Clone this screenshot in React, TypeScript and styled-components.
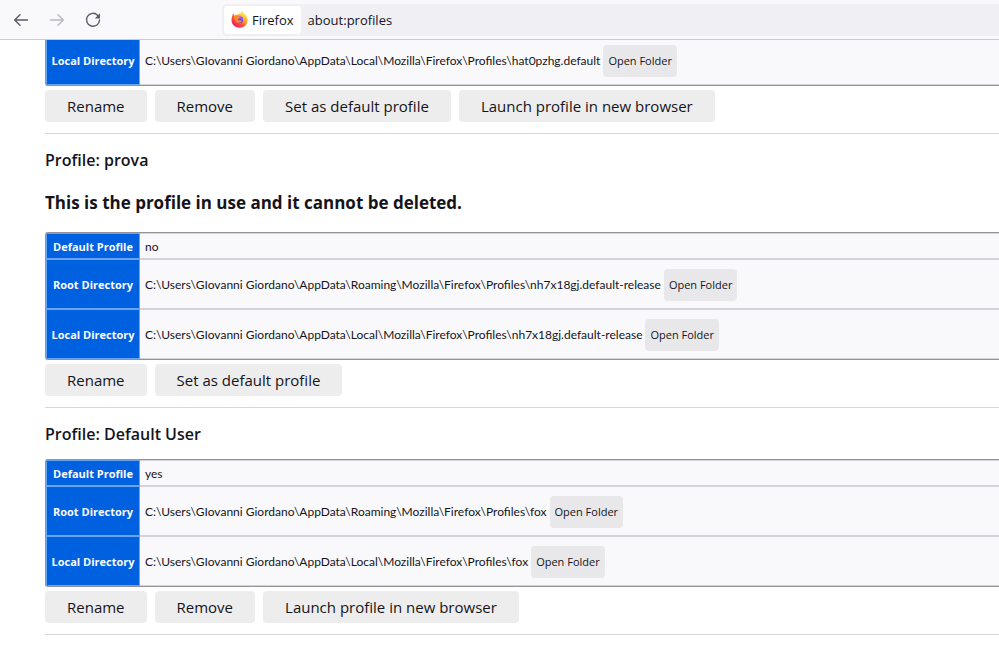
import React from "react";
import styled, { createGlobalStyle } from "styled-components";

const GlobalStyle = createGlobalStyle`
  *, *::before, *::after { box-sizing: border-box; }
  html, body { margin: 0; background: #ffffff; }
  body {
    font-family: "Segoe UI", "Open Sans", "Noto Sans", sans-serif;
    color: #15141a;
    overflow: hidden;
  }
  button, input { font-family: inherit; color: inherit; }
`;

const Page = styled.div`
  display: flex;
  flex-direction: column;
`;

const Toolbar = styled.header`
  display: flex;
  align-items: center;
  height: 40px;
  padding-left: 9px;
  background: #f9f9fb;
  border-bottom: 1px solid #cccccc;
`;

const Nav = styled.nav`
  display: flex;
  gap: 12px;
`;

const NavButton = styled.button`
  display: flex;
  align-items: center;
  justify-content: center;
  width: 24px;
  height: 24px;
  padding: 0;
  border: 0;
  background: none;

  &:disabled { opacity: 0.4; }
`;

const UrlBar = styled.div`
  display: flex;
  align-items: center;
  flex: 1;
  height: 32px;
  margin-left: 117px;
  padding: 2px;
  border-radius: 4px 0 0 4px;
  background: #f0f0f4;
`;

const Identity = styled.button`
  display: flex;
  align-items: center;
  gap: 4px;
  height: 28px;
  padding: 0 7px;
  border: 0;
  border-radius: 3px;
  background: #ffffff;
  font-size: 13px;
`;

const UrlInput = styled.input`
  flex: 1;
  min-width: 0;
  padding: 0 7px;
  border: 0;
  outline: 0;
  background: transparent;
  font-size: 13px;
`;

const Content = styled.main`
  overflow: hidden;
  padding-left: 45px;
`;

const Profile = styled.section<{ $scrolled?: boolean }>`
  margin-top: ${(p) => (p.$scrolled ? "-6px" : "0")};
  border-bottom: 1px solid #d7d7db;
  padding-bottom: 11px;
`;

const ProfileName = styled.h2`
  margin: 0;
  padding: 14px 0 13px;
  font-size: 16px;
  font-weight: 600;
  line-height: 24px;
`;

const InUse = styled.h3`
  margin: 0;
  padding: 5px 0 16px;
  font-size: 17px;
  font-weight: 700;
  line-height: 26px;
`;

const Table = styled.table`
  width: 100%;
  border: 1px solid #939399;
  border-right: 0;
  border-radius: 3px 0 0 3px;
  border-spacing: 0;
  overflow: hidden;
  background: #f9f9fb;
  font-size: 12px;
  line-height: 16px;
`;

const Row = styled.tr<{ $tall?: boolean }>`
  height: ${(p) => (p.$tall ? "50px" : "26px")};
`;

const Label = styled.th`
  width: 94px;
  padding: 2px 0 0;
  border: 1px solid #6ba4ee;
  background: #0061e0;
  color: #fbfbfe;
  font-size: 11px;
  font-weight: 700;
  text-align: center;
  white-space: nowrap;
`;

const Value = styled.td`
  padding: 1px 0 0 5px;
  border: 1px solid #d4d4d8;
  border-width: 1px 0;
  font-family: "Segoe UI", Lato, sans-serif;
  white-space: nowrap;
`;

const Directory = styled.div`
  display: flex;
  align-items: center;
  gap: 3px;
`;

const FolderButton = styled.button`
  height: 32px;
  padding: 0 5px;
  border: 0;
  border-radius: 4px;
  background: #e8e8ea;
  font-family: "Segoe UI", "Open Sans", sans-serif;
  font-size: 11px;
  font-weight: 500;
`;

const Actions = styled.div`
  display: flex;
  gap: 8px;
  padding-top: 4px;
`;

const ActionButton = styled.button`
  height: 32px;
  padding: 0 22px;
  border: 0;
  border-radius: 4px;
  background: #ededed;
  font-size: 15px;
  white-space: nowrap;
`;

const Arrow = ({ forward }: { forward?: boolean }) => (
  <svg width="16" height="16" viewBox="0 0 16 16" fill="none" stroke="#5b5b66" strokeWidth="1.4" strokeLinecap="round" strokeLinejoin="round">
    <path d={forward ? "M1.5 8H14.3M9 2.7L14.3 8L9 13.3" : "M14.5 8H1.7M7 2.7L1.7 8L7 13.3"} />
  </svg>
);

const Reload = () => (
  <svg width="16" height="16" viewBox="0 0 16 16" fill="none">
    <path d="M12.6 3.2A6.5 6.5 0 1 0 14.5 8" stroke="#5b5b66" strokeWidth="1.4" strokeLinecap="round" />
    <path d="M15 1.2V6a.6.6 0 0 1-.6.6H9.8Z" fill="#5b5b66" />
  </svg>
);

const FirefoxLogo = () => (
  <svg width="17" height="17" viewBox="0 0 32 32">
    <defs>
      <linearGradient id="flame" x1="0.85" y1="0.1" x2="0.2" y2="0.95">
        <stop offset="0" stopColor="#fff44f" />
        <stop offset="0.35" stopColor="#ffb02e" />
        <stop offset="0.6" stopColor="#ff5a36" />
        <stop offset="1" stopColor="#f0166e" />
      </linearGradient>
      <linearGradient id="globe" x1="0.7" y1="0" x2="0.3" y2="1">
        <stop offset="0" stopColor="#a05cff" />
        <stop offset="1" stopColor="#5a3fc8" />
      </linearGradient>
      <linearGradient id="tail" x1="0.6" y1="0" x2="0.5" y2="1">
        <stop offset="0" stopColor="#fff36a" />
        <stop offset="0.6" stopColor="#ffc83a" />
        <stop offset="1" stopColor="#ff8a2c" />
      </linearGradient>
    </defs>
    <path d="M5 3c0 3 .5 4 1.500 6C8 7.600 10 7 12 7.200 14 5 16 4.500 18 4.500L20 0c3 2 4 5.500 6 7l1 1c3 3 4 6 4 10 0 8-6.500 13.500-15 13.500S1 25.500 1 18c0-5 1.500-11.500 4-15Z" fill="url(#flame)" />
    <circle cx="17" cy="16" r="6" fill="url(#globe)" />
    <path d="M20 0c-2 5 0 8 3 11 2.500 2.500 3 6 1.500 9 3-1 4-4 4-7 1 2 1 4 1 6 2-5 .5-9-3-12.500C24 5 21 4 20 0Z" fill="url(#tail)" />
    <path d="M5.500 10c3-2 6-1.500 8 .5l4 .8c0 1.700-2 2.400-4 3.200-1 2 .5 4 3.500 3.500 2-.4 3 .3 3 1-1.500 3.500-7 4.500-10.500 1.500C7 18 6 14 5.500 10Z" fill="#ff8a26" />
  </svg>
);

type Entry = { label: string; value: string; folder?: boolean };
type ProfileData = {
  name?: string;
  inUse?: boolean;
  entries: Entry[];
  actions: string[];
};

const base = "C:\\Users\\GIovanni Giordano\\AppData\\";
const directory = (kind: "Root" | "Local", id: string): Entry => ({
  label: `${kind} Directory`,
  value: `${base}${kind === "Root" ? "Roaming" : "Local"}\\Mozilla\\Firefox\\Profiles\\${id}`,
  folder: true,
});

const profiles: ProfileData[] = [
  {
    entries: [directory("Local", "hat0pzhg.default")],
    actions: ["Rename", "Remove", "Set as default profile", "Launch profile in new browser"],
  },
  {
    name: "prova",
    inUse: true,
    entries: [
      { label: "Default Profile", value: "no" },
      directory("Root", "nh7x18gj.default-release"),
      directory("Local", "nh7x18gj.default-release"),
    ],
    actions: ["Rename", "Set as default profile"],
  },
  {
    name: "Default User",
    entries: [
      { label: "Default Profile", value: "yes" },
      directory("Root", "fox"),
      directory("Local", "fox"),
    ],
    actions: ["Rename", "Remove", "Launch profile in new browser"],
  },
];

export default function App() {
  return (
    <Page>
      <GlobalStyle />
      <Toolbar>
        <Nav aria-label="Navigation">
          <NavButton aria-label="Back"><Arrow /></NavButton>
          <NavButton aria-label="Forward" disabled><Arrow forward /></NavButton>
          <NavButton aria-label="Reload"><Reload /></NavButton>
        </Nav>
        <UrlBar>
          <Identity><FirefoxLogo />Firefox</Identity>
          <UrlInput aria-label="Address" defaultValue="about:profiles" />
        </UrlBar>
      </Toolbar>
      <Content>
        {profiles.map((profile, index) => (
          <Profile key={index} $scrolled={!profile.name}>
            {profile.name && <ProfileName>Profile: {profile.name}</ProfileName>}
            {profile.inUse && <InUse>This is the profile in use and it cannot be deleted.</InUse>}
            <Table>
              <tbody>
                {profile.entries.map((entry) => (
                  <Row key={entry.label} $tall={entry.folder}>
                    <Label scope="row">{entry.label}</Label>
                    <Value>
                      {entry.folder ? (
                        <Directory>
                          <span>{entry.value}</span>
                          <FolderButton>Open Folder</FolderButton>
                        </Directory>
                      ) : entry.value}
                    </Value>
                  </Row>
                ))}
              </tbody>
            </Table>
            <Actions>
              {profile.actions.map((action) => (
                <ActionButton key={action}>{action}</ActionButton>
              ))}
            </Actions>
          </Profile>
        ))}
      </Content>
    </Page>
  );
}
